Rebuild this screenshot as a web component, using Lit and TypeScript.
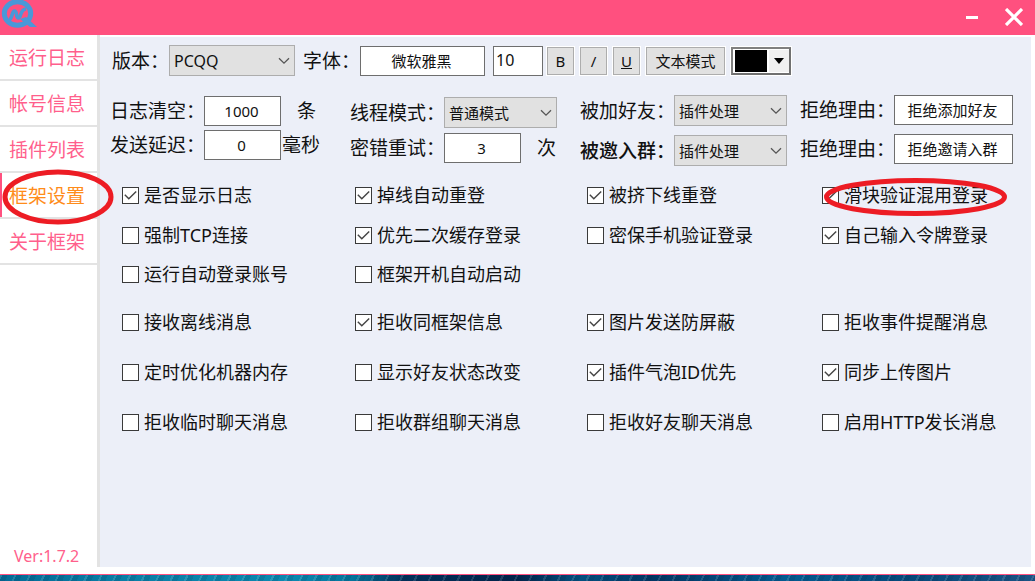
import { LitElement, html, css, svg, nothing } from "lit";
import { customElement, property, state } from "lit/decorators.js";
import { classMap } from "lit/directives/class-map.js";

type Option = { text: string; on?: boolean; marked?: boolean };

const NAV = ["运行日志", "帐号信息", "插件列表", "框架设置", "关于框架"];

const LOGIN_OPTIONS: Option[] = [
  { text: "是否显示日志", on: true },
  { text: "掉线自动重登", on: true },
  { text: "被挤下线重登", on: true },
  { text: "滑块验证混用登录", on: true, marked: true },
  { text: "强制TCP连接" },
  { text: "优先二次缓存登录", on: true },
  { text: "密保手机验证登录" },
  { text: "自己输入令牌登录", on: true },
  { text: "运行自动登录账号" },
  { text: "框架开机自动启动" },
];

const MESSAGE_OPTIONS: Option[] = [
  { text: "接收离线消息" },
  { text: "拒收同框架信息", on: true },
  { text: "图片发送防屏蔽", on: true },
  { text: "拒收事件提醒消息" },
  { text: "定时优化机器内存" },
  { text: "显示好友状态改变" },
  { text: "插件气泡ID优先", on: true },
  { text: "同步上传图片", on: true },
  { text: "拒收临时聊天消息" },
  { text: "拒收群组聊天消息" },
  { text: "拒收好友聊天消息" },
  { text: "启用HTTP发长消息" },
];

@customElement("check-option")
export class CheckOption extends LitElement {
  @property() text = "";
  @property({ type: Boolean }) on = false;
  @property({ type: Boolean }) marked = false;

  static styles = css`
    :host { display: flex; align-items: center; }
    label { position: relative; display: flex; align-items: center; gap: 5px; font-size: 18px; line-height: 24px; white-space: nowrap; }
    .box { display: grid; width: 17px; height: 17px; flex: none; }
    .box > * { grid-area: 1 / 1; }
    input { appearance: none; box-sizing: border-box; width: 17px; height: 17px; margin: 0; border: 1px solid #3a3a3a; background: #fff; }
    .tick { visibility: hidden; pointer-events: none; }
    input:checked + .tick { visibility: visible; }
    .mark { position: absolute; left: 2px; top: -5px; width: 183px; height: 38px; pointer-events: none; }
  `;

  render() {
    return html`
      <label>
        <span class="box">
          <input type="checkbox" .checked=${this.on} />
          <svg class="tick" width="17" height="17" viewBox="0 0 17 17" fill="none" stroke="#444" stroke-width="1.4">
            <path d="M2.8 7.8 L6.8 11.8 L14.2 4.4" />
          </svg>
        </span>
        <span>${this.text}</span>
        ${this.marked
          ? html`<svg class="mark" viewBox="0 0 183 38" fill="none" stroke="#ed1c24" stroke-width="5">
              <ellipse cx="91.5" cy="19" rx="89" ry="16.5" />
            </svg>`
          : nothing}
      </label>
    `;
  }
}

@customElement("drop-down")
export class DropDown extends LitElement {
  @property() label = "";
  @property({ type: Array }) options: string[] = [];
  @property({ type: Boolean, reflect: true }) large = false;
  @property({ type: Boolean }) strong = false;

  static styles = css`
    :host { display: flex; }
    .field { display: flex; align-items: center; }
    label { width: 94px; font-size: 19px; line-height: 24px; white-space: nowrap; }
    .strong { font-weight: 500; }
    .picker { display: grid; align-items: center; }
    .picker > * { grid-area: 1 / 1; }
    select { appearance: none; box-sizing: border-box; width: 113px; height: 31px; margin: 0; padding: 0 4px; border: 1px solid #adadad; border-radius: 0; background: #e1e1e1; color: #111; font: inherit; font-size: 15px; }
    .chevron { justify-self: end; margin-right: 5px; pointer-events: none; }
    :host([large]) label { width: 57px; }
    :host([large]) select { width: 126px; font-size: 16px; }
  `;

  render() {
    return html`
      <div class="field">
        <label for="pick" class=${classMap({ strong: this.strong })}>${this.label}</label>
        <span class="picker">
          <select id="pick">${this.options.map((o) => html`<option>${o}</option>`)}</select>
          <svg class="chevron" width="12" height="8" viewBox="0 0 12 8" fill="none" stroke="#555" stroke-width="1.3">
            <path d="M1 1.2 L6 6.2 L11 1.2" />
          </svg>
        </span>
      </div>
    `;
  }
}

@customElement("app-root")
export class AppRoot extends LitElement {
  @state() private active = 3;

  static styles = css`
    :host { display: flex; flex-direction: column; min-height: 100vh; background: #fff; color: #111; font-family: "Noto Sans", "Noto Sans CJK SC", sans-serif; font-size: 19px; line-height: 24px; }
    * { box-sizing: border-box; }
    button, input { font: inherit; color: inherit; margin: 0; border-radius: 0; }

    .titlebar { display: flex; align-items: flex-start; justify-content: space-between; height: 35px; background: #ff507f; }
    .logo { display: block; }
    .window-buttons { display: flex; }
    .window-buttons button { display: flex; align-items: center; justify-content: center; width: 42px; height: 33px; padding: 0; border: 0; background: none; }

    .body { display: flex; flex: 1; padding: 0 4px 7px 0; }
    .sidebar { display: flex; flex-direction: column; justify-content: space-between; width: 100px; flex: none; border-right: 3px solid #e3e3e3; }
    .nav { display: flex; flex-direction: column; }
    .nav a { position: relative; display: flex; align-items: center; height: 46px; padding: 2px 0 0 9px; border-bottom: 2px solid #e3e3e3; color: #ff5f8c; text-decoration: none; white-space: nowrap; }
    .nav a.active { color: #ff8c1a; box-shadow: inset 2px 0 #ff507f; }
    .mark { position: absolute; left: 2px; top: -4px; pointer-events: none; z-index: 1; }
    .version { padding: 0 0 0 14px; font-size: 16px; line-height: 22px; color: #ff5f8c; }

    .settings { flex: 1; min-width: 0; margin-top: 2px; background: #eceff8; padding: 8px 9px 0 10px; }
    .toolbar { display: flex; align-items: center; gap: 4px; padding-left: 2px; }
    .typeface { display: flex; align-items: center; gap: 8px; }
    .tools { display: flex; align-items: center; gap: 6px; }
    .pair { display: flex; align-items: center; }
    .pair label { width: 94px; white-space: nowrap; }
    .toolbar .pair label { width: 57px; }
    .text { width: 77px; height: 30px; padding: 0 4px 1px 2px; border: 1px solid #6e6e6e; background: #fff; font-size: 15px; text-align: center; }
    .font-name { width: 125px; }
    .font-size { width: 50px; text-align: left; font-size: 16px; }
    .reason { width: 119px; }
    .tool { width: 27px; height: 28px; padding: 0; border: 1px solid #adadad; outline: 1px solid #fff; background: #e1e1e1; font-size: 15px; line-height: 20px; }
    .wide { width: 79px; }
    .underline { text-decoration: underline; }
    .color { display: flex; gap: 2px; width: 60px; height: 28px; padding: 1px 0 1px 2px; border: 2px solid; border-color: #808080 #707070 #707070 #808080; outline: 1px solid #fff; background: #fff; }
    .swatch { flex: 1; height: 22px; background: #000; }
    .arrow { display: flex; align-items: center; justify-content: center; width: 20px; height: 22px; background: #f0f0f0; }

    .fields { display: grid; grid-template-columns: 240fr 230fr 220fr 222fr; padding-top: 19px; }
    .stack { display: flex; flex-direction: column; gap: 9px; align-items: flex-start; }
    .close { gap: 4px; padding-top: 1px; }
    .lowered { gap: 5px; padding-top: 2px; }
    .unit { padding-left: 16px; }
    .unit.tight { padding-left: 1px; }

    .options { display: grid; grid-template-columns: 233fr 232fr 235fr 200fr; padding-left: 12px; }
    .login { grid-template-rows: 40px 40px 38px; padding-top: 9px; }
    .messages { grid-auto-rows: 50px; padding-top: 4px; }

    .desktop {
      height: 7px;
      border-top: 1px solid #ff507f;
      background:
        repeating-linear-gradient(115deg, rgba(255, 255, 255, 0.12) 0 2px, rgba(0, 30, 60, 0.12) 2px 7px, transparent 7px 13px),
        linear-gradient(90deg, #046a96 0%, #0a7ea6 12%, #0c88b0 28%, #05749c 34%, #02305a 39%, #02234a 50%, #045080 56%, #023563 63%, #045a90 76%, #06487a 88%, #1b5384 100%);
    }
  `;

  private option(o: Option) {
    return html`<check-option .text=${o.text} .on=${!!o.on} .marked=${!!o.marked}></check-option>`;
  }

  private logo() {
    return svg`
      <ellipse cx="17.5" cy="13.5" rx="13.2" ry="11.8" fill="none" stroke="#4a98d8" stroke-width="5"/>
      <path d="M20 19 L26 17 L37 27 L30 27 Z" fill="#4a98d8"/>
      <path d="M9 19.5 C12.5 19.5 11.5 11 14.5 11 C17.5 11 15.5 18 18.5 18 C21.5 18 19.5 9.5 26 9" fill="none" stroke="#4a98d8" stroke-width="3.6"/>
    `;
  }

  render() {
    return html`
      <header class="titlebar">
        <svg class="logo" width="38" height="30" viewBox="0 0 38 30">${this.logo()}</svg>
        <div class="window-buttons">
          <button aria-label="最小化">
            <svg width="12" height="4" viewBox="0 0 12 4"><path d="M0 2.5H12" stroke="#fff" stroke-width="3" /></svg>
          </button>
          <button aria-label="关闭">
            <svg width="18" height="18" viewBox="0 0 18 18"><path d="M1 1L17 17M17 1L1 17" stroke="#fff" stroke-width="3.2" /></svg>
          </button>
        </div>
      </header>

      <div class="body">
        <aside class="sidebar">
          <nav class="nav">
            ${NAV.map(
              (name, i) => html`<a href="#" class=${classMap({ active: i === this.active })}
                @click=${(e: Event) => { e.preventDefault(); this.active = i; }}>${name}${i === 3
                ? html`<svg class="mark" width="112" height="56" viewBox="0 0 112 56" fill="none" stroke="#ed1c24" stroke-width="5">
                    <ellipse cx="56" cy="28" rx="53" ry="25" />
                  </svg>`
                : nothing}</a>`
            )}
          </nav>
          <div class="version">Ver:1.7.2</div>
        </aside>

        <main class="settings">
          <div class="toolbar">
            <div class="typeface">
              <drop-down large label="版本：" .options=${["PCQQ"]}></drop-down>
              <div class="pair">
                <label for="font">字体：</label>
                <input id="font" class="text font-name" value="微软雅黑" />
              </div>
              <input class="text font-size" aria-label="字号" value="10" />
            </div>
            <div class="tools">
              <button class="tool">B</button>
              <button class="tool">/</button>
              <button class="tool underline">U</button>
              <button class="tool wide">文本模式</button>
              <button class="color" aria-label="颜色">
                <span class="swatch"></span>
                <span class="arrow"><svg width="10" height="6" viewBox="0 0 10 6"><path d="M0 0H10L5 6Z" /></svg></span>
              </button>
            </div>
          </div>

          <div class="fields">
            <div class="stack close">
              <div class="pair">
                <label for="clear">日志清空：</label>
                <input id="clear" class="text" value="1000" /><span class="unit">条</span>
              </div>
              <div class="pair">
                <label for="delay">发送延迟：</label>
                <input id="delay" class="text" value="0" /><span class="unit tight">毫秒</span>
              </div>
            </div>
            <div class="stack lowered">
              <drop-down label="线程模式：" .options=${["普通模式"]}></drop-down>
              <div class="pair">
                <label for="retry">密错重试：</label>
                <input id="retry" class="text" value="3" /><span class="unit">次</span>
              </div>
            </div>
            <div class="stack">
              <drop-down label="被加好友：" .options=${["插件处理"]}></drop-down>
              <drop-down strong label="被邀入群：" .options=${["插件处理"]}></drop-down>
            </div>
            <div class="stack">
              <div class="pair">
                <label for="friend">拒绝理由：</label>
                <input id="friend" class="text reason" value="拒绝添加好友" />
              </div>
              <div class="pair">
                <label for="group">拒绝理由：</label>
                <input id="group" class="text reason" value="拒绝邀请入群" />
              </div>
            </div>
          </div>

          <div class="options login">${LOGIN_OPTIONS.map((o) => this.option(o))}</div>
          <div class="options messages">${MESSAGE_OPTIONS.map((o) => this.option(o))}</div>
        </main>
      </div>
      <div class="desktop"></div>
    `;
  }
}
